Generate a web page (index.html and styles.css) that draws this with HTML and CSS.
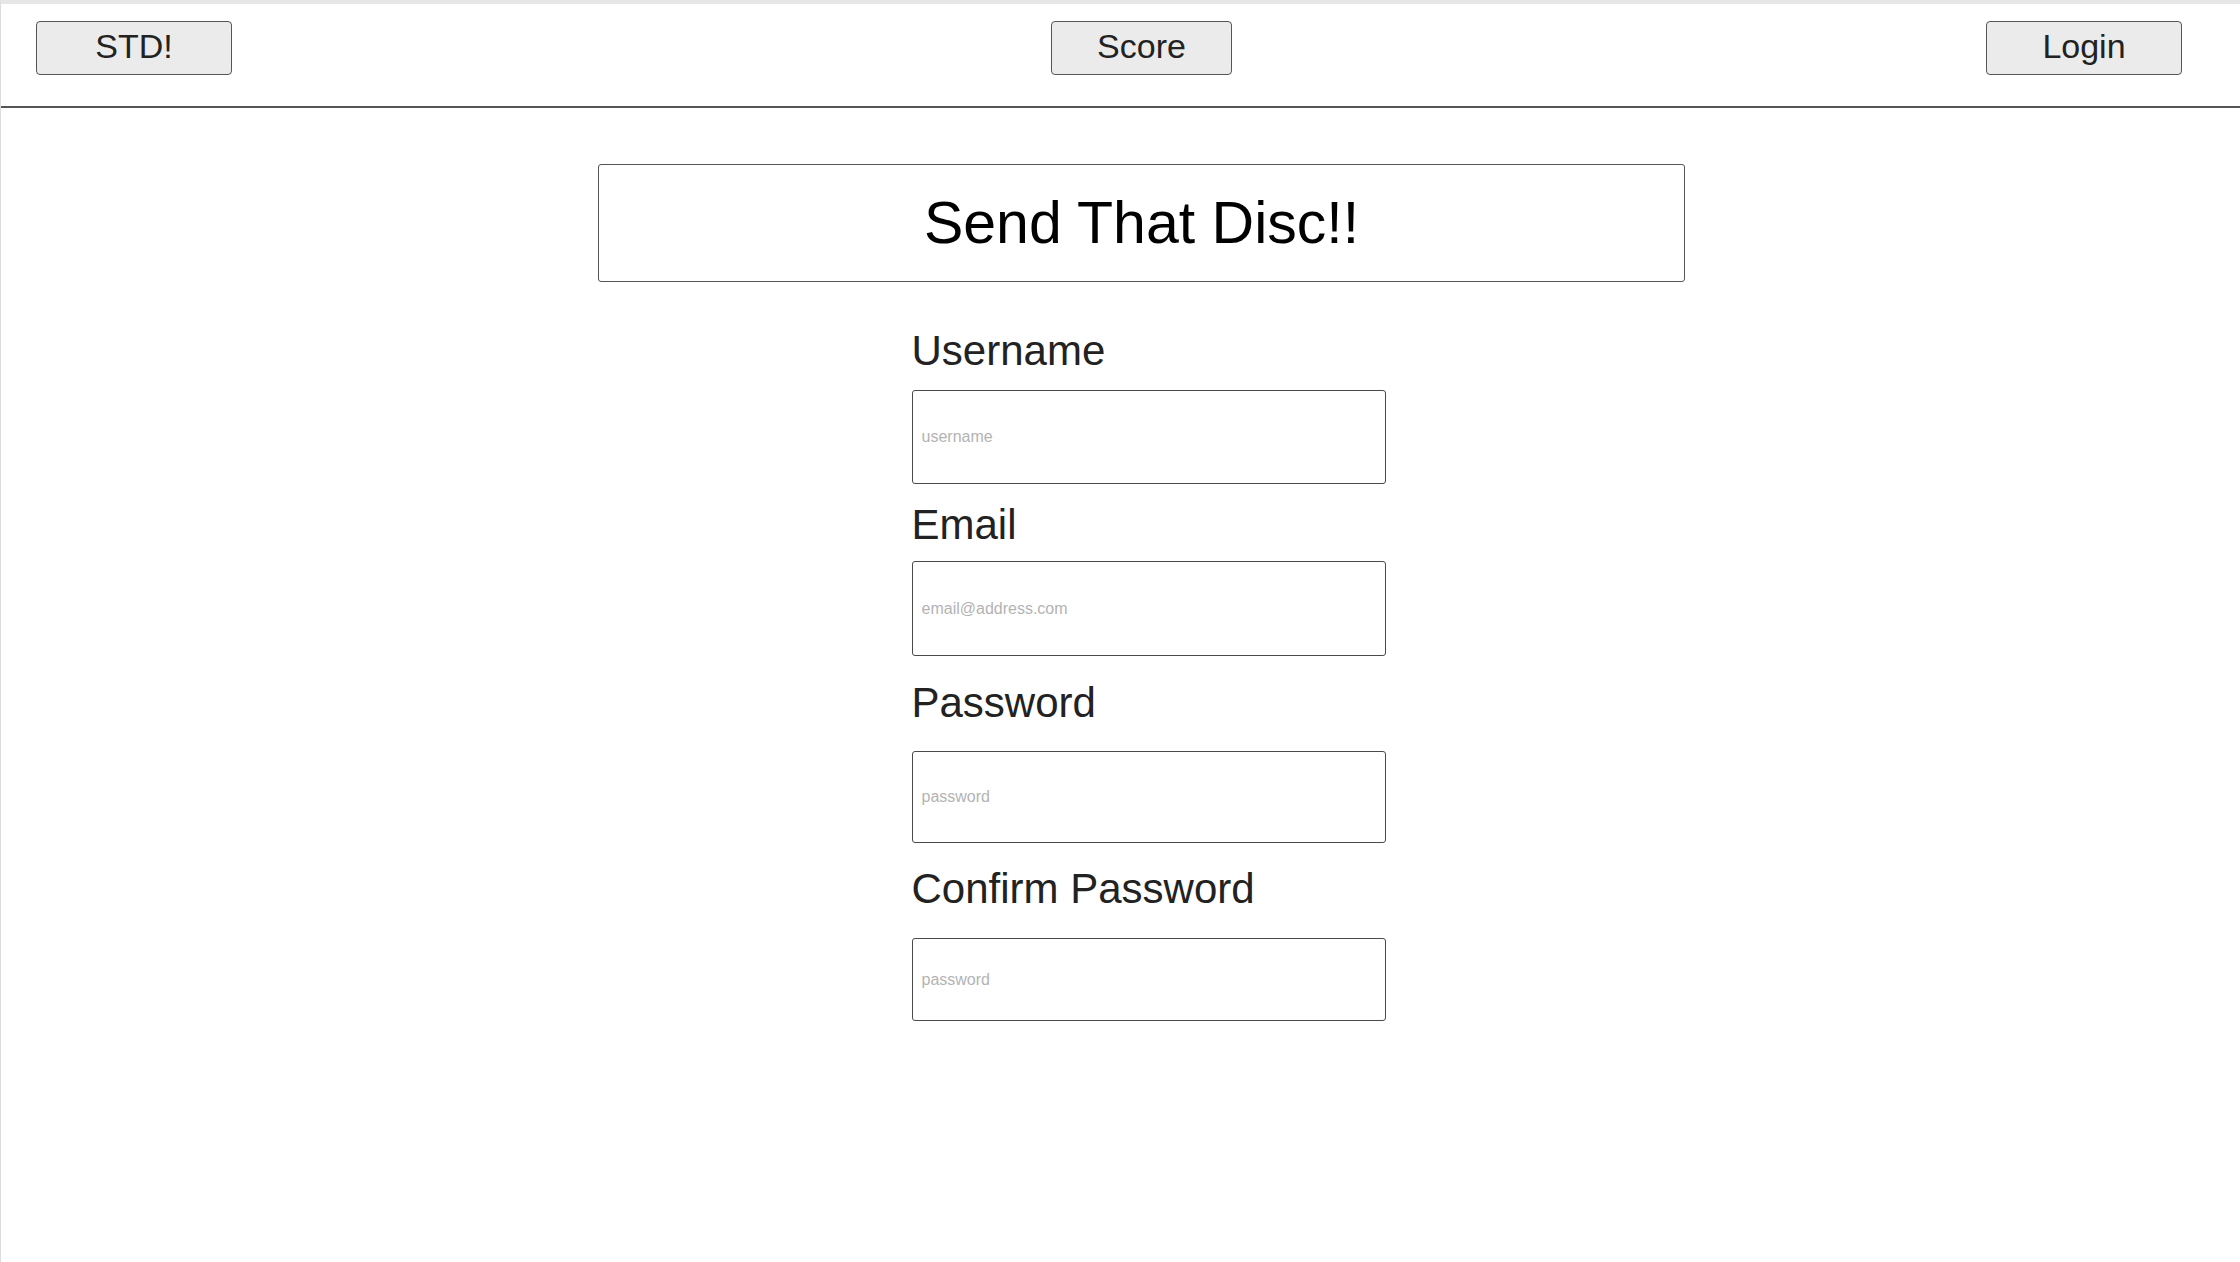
FILE: index.html
```html
<!DOCTYPE html>
<html lang="en">
<head>
<meta charset="utf-8">
<title>Send That Disc!!</title>
<link rel="stylesheet" href="styles.css">
</head>
<body>
<div class="page">
  <header class="topbar">
    <button class="nav-btn nav-home" type="button">STD!</button>
    <button class="nav-btn nav-score" type="button">Score</button>
    <button class="nav-btn nav-login" type="button">Login</button>
  </header>
  <main class="main">
    <div class="title-box">
      <h1 class="title">Send That Disc!!</h1>
    </div>
    <form class="signup">
      <label class="field-label label-username" for="username">Username</label>
      <input class="field-input input-username" id="username" type="text" placeholder="username">
      <label class="field-label label-email" for="email">Email</label>
      <input class="field-input input-email" id="email" type="email" placeholder="email@address.com">
      <label class="field-label label-password" for="password">Password</label>
      <input class="field-input input-password" id="password" type="password" placeholder="password">
      <label class="field-label label-confirm" for="confirm">Confirm Password</label>
      <input class="field-input input-confirm" id="confirm" type="password" placeholder="password">
    </form>
  </main>
</div>
</body>
</html>
```

FILE: styles.css
```css
html, body {
  margin: 0;
  padding: 0;
  background: #ffffff;
}

body {
  font-family: "Liberation Sans", Arial, Helvetica, sans-serif;
  color: #222222;
}

.page {
  min-height: 100vh;
  box-sizing: border-box;
  border-left: 1px solid #dcdcdc;
  border-top: 4px solid #e6e6e6;
}

.topbar {
  display: flex;
  align-items: flex-start;
  box-sizing: border-box;
  height: 104px;
  padding: 17px 58px 0 35px;
  border-bottom: 2px solid #555555;
}

.nav-btn {
  box-sizing: border-box;
  height: 54px;
  padding: 0 0 5px 0;
  background: #ebebeb;
  border: 1px solid #555555;
  border-radius: 4px;
  font-family: "Liberation Sans", Arial, Helvetica, sans-serif;
  font-size: 34px;
  color: #222222;
  line-height: 1;
}

.nav-home {
  width: 196px;
}

.nav-score {
  width: 181px;
  margin-left: 819px;
}

.nav-login {
  width: 196px;
  margin-left: auto;
}

.main {
  display: flex;
  flex-direction: column;
  align-items: center;
  padding-left: 42px;
  padding-top: 56px;
}

.title-box {
  box-sizing: border-box;
  width: 1087px;
  height: 118px;
  border: 1px solid #555555;
  border-radius: 3px;
  display: flex;
  align-items: center;
  justify-content: center;
}

.title {
  margin: 0;
  font-size: 59px;
  font-weight: normal;
  color: #000000;
  line-height: 1;
}

.signup {
  box-sizing: border-box;
  width: 488px;
  padding-left: 14px;
  display: flex;
  flex-direction: column;
}

.field-label {
  display: block;
  font-size: 42px;
  line-height: 48px;
  color: #222222;
}

.field-input {
  box-sizing: border-box;
  width: 474px;
  margin: 0;
  padding: 0 9px;
  border: 1px solid #4a4a4a;
  border-radius: 3px;
  background: #ffffff;
  font-family: "Liberation Sans", Arial, Helvetica, sans-serif;
  font-size: 16px;
  color: #222222;
  outline: none;
}

.field-input::placeholder {
  color: #b3b3b3;
}

.label-username {
  margin-top: 45px;
}

.input-username {
  margin-top: 15px;
  height: 94px;
}

.label-email {
  margin-top: 17px;
}

.input-email {
  margin-top: 12px;
  height: 95px;
}

.label-password {
  margin-top: 23px;
}

.input-password {
  margin-top: 24px;
  height: 92px;
}

.label-confirm {
  margin-top: 22px;
}

.input-confirm {
  margin-top: 25px;
  height: 83px;
}
```
